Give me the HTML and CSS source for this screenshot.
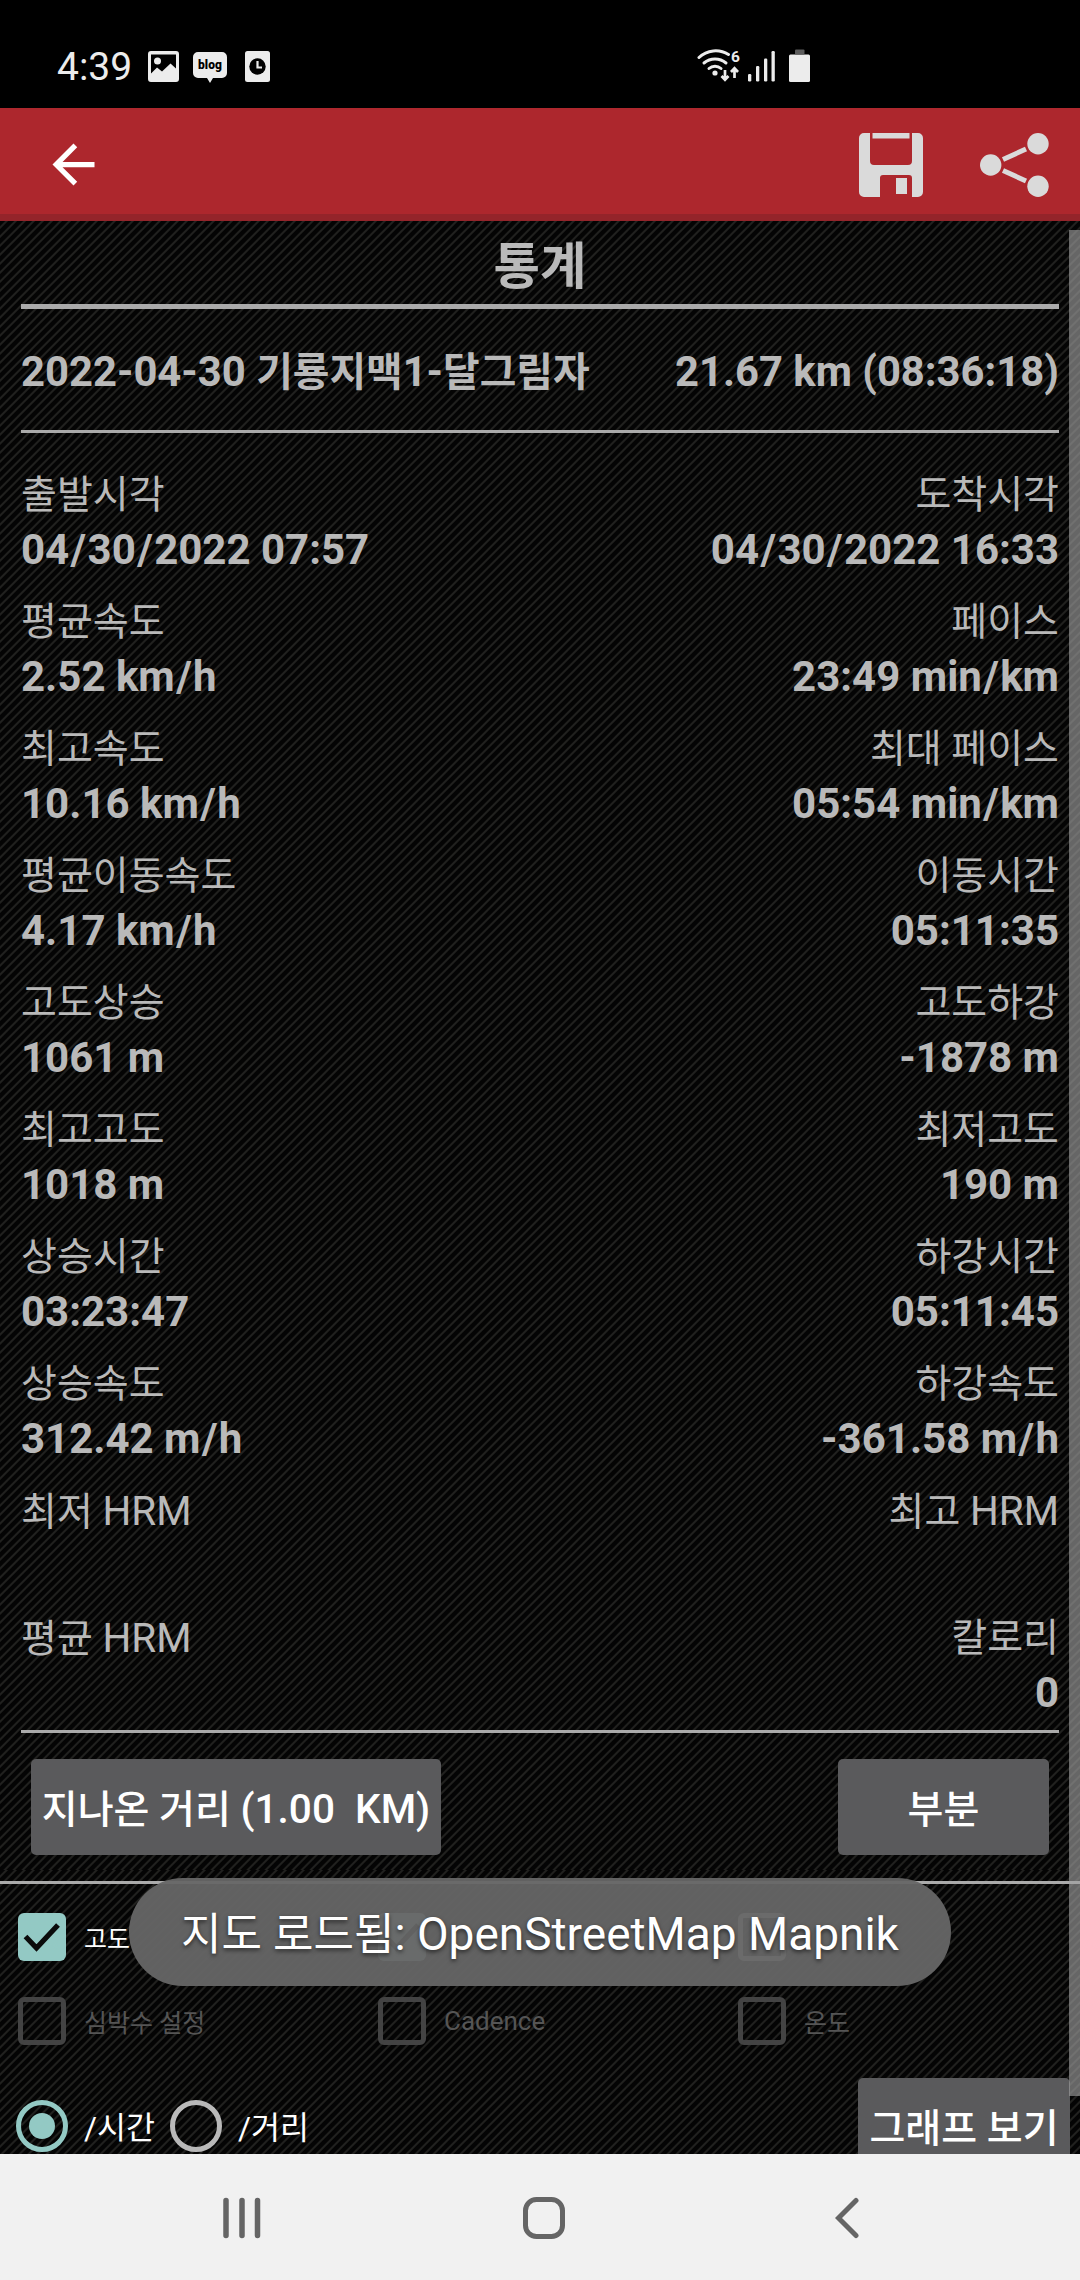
FILE: index.html
```html
<!DOCTYPE html>
<html lang="ko">
<head>
  <meta charset="UTF-8">
  <meta name="viewport" content="width=device-width, initial-scale=1.0">
  <title>통계</title>
  <link rel="stylesheet" href="styles.css">
</head>
<body>

  <!-- Status bar -->
  <div class="status-bar">
    <span class="clock">4:39</span>
    <svg class="icon-picture" width="31" height="31" viewBox="0 0 31 31">
      <path fill="#ececec" fill-rule="evenodd" d="M3 0h25a3 3 0 0 1 3 3v25a3 3 0 0 1-3 3H3a3 3 0 0 1-3-3V3a3 3 0 0 1 3-3zM3 3.500V22.500l6-6 5 4 8.500-8 5.500 5V3.500z"/>
      <circle cx="9.500" cy="10" r="3.500" fill="#ececec"/>
    </svg>
    <svg class="icon-blog" width="34" height="31" viewBox="0 0 34 31">
      <path fill="#ececec" d="M5 0h24a5 5 0 0 1 5 5v16a5 5 0 0 1-5 5h-9l-3 5-3-5H5a5 5 0 0 1-5-5V5a5 5 0 0 1 5-5z"/>
      <text x="17" y="17" text-anchor="middle" textLength="24" class="blog-text">blog</text>
    </svg>
    <svg class="icon-alarm" width="25" height="31" viewBox="0 0 25 31">
      <rect width="25" height="31" rx="2.500" fill="#ececec"/>
      <circle cx="12.500" cy="15.500" r="8.200" fill="#000"/>
      <path d="M12.500 10v6.500h4.500" fill="none" stroke="#ececec" stroke-width="2.200"/>
    </svg>
    <svg class="icon-signals" width="114" height="34" viewBox="0 0 114 34">
      <g fill="none" stroke="#ececec" stroke-width="3" stroke-linecap="round">
        <path d="M2 9.500a24 24 0 0 1 29.500-3"/>
        <path d="M7 15a17 17 0 0 1 22 0"/>
        <path d="M12 20.500a9 9 0 0 1 12 0"/>
      </g>
      <circle cx="18" cy="25" r="2.600" fill="#ececec"/>
      <text x="34" y="14" class="wifi-text">6</text>
      <path d="M28 22v10M24.500 28l3.500 3.700 3.500-3.700M37.500 30v-10M34 24l3.500-3.700L41 24" fill="none" stroke="#ececec" stroke-width="2.700"/>
      <g fill="#ececec">
        <rect x="51" y="26" width="3.300" height="7.500" rx="1.200"/>
        <rect x="59" y="18" width="3.300" height="15.500" rx="1.200"/>
        <rect x="67" y="10.500" width="3.300" height="23" rx="1.200"/>
        <rect x="74.500" y="3" width="3.300" height="30.500" rx="1.200"/>
        <rect x="92" y="6.500" width="21" height="27.500" rx="1.500"/>
      </g>
      <rect x="98" y="1.500" width="9.500" height="5" rx="1" fill="#5c5c5c"/>
    </svg>
  </div>

  <!-- App bar -->
  <header class="app-bar">
    <svg class="back" width="63" height="63" viewBox="0 0 24 24">
      <path fill="#fff" d="M20 11H7.830l5.590-5.590L12 4l-8 8 8 8 1.410-1.410L7.830 13H20v-2z"/>
    </svg>
    <svg class="save" width="64" height="64" viewBox="0 0 64 64">
      <path fill="#dadada" d="M5 0h6v28a4 4 0 0 0 4 4h34a4 4 0 0 0 4-4V0h6a5 5 0 0 1 5 5v54a5 5 0 0 1-5 5h-6V45a3 3 0 0 0-3-3H24a3 3 0 0 0-3 3v19H5a5 5 0 0 1-5-5V5a5 5 0 0 1 5-5z"/>
      <rect x="13.500" y="0" width="37" height="5.500" fill="#dadada"/>
      <rect x="37" y="45" width="11" height="16" fill="#dadada"/>
    </svg>
    <svg width="69" height="64" viewBox="0 0 69 64">
      <g fill="#dadada">
        <circle cx="10.700" cy="32" r="10.700"/>
        <circle cx="58" cy="10.800" r="10.700"/>
        <circle cx="58" cy="53.200" r="10.700"/>
      </g>
      <path d="M23 26.500l23-10.500M23 37.500L46 48" stroke="#dadada" stroke-width="5"/>
    </svg>
  </header>

  <!-- Statistics -->
  <main class="content">
    <section class="stats">
      <h1>통계</h1>
      <div class="track">
        <span>2022-04-30 <span class="ko">기룡지맥</span>1-<span class="ko">달그림자</span></span>
        <span>21.67 km (08:36:18)</span>
      </div>
      <div class="stat-list">
        <div class="stat-row">
          <div class="stat"><label>출발시각</label><b>04<i>/</i>30<i>/</i>2022 07:57</b></div>
          <div class="stat"><label>도착시각</label><b>04<i>/</i>30<i>/</i>2022 16:33</b></div>
        </div>
        <div class="stat-row">
          <div class="stat"><label>평균속도</label><b>2.52 km<i>/</i>h</b></div>
          <div class="stat"><label>페이스</label><b>23:49 min<i>/</i>km</b></div>
        </div>
        <div class="stat-row">
          <div class="stat"><label>최고속도</label><b>10.16 km<i>/</i>h</b></div>
          <div class="stat"><label>최대 페이스</label><b>05:54 min<i>/</i>km</b></div>
        </div>
        <div class="stat-row">
          <div class="stat"><label>평균이동속도</label><b>4.17 km<i>/</i>h</b></div>
          <div class="stat"><label>이동시간</label><b>05:11:35</b></div>
        </div>
        <div class="stat-row">
          <div class="stat"><label>고도상승</label><b>1061 m</b></div>
          <div class="stat"><label>고도하강</label><b>-1878 m</b></div>
        </div>
        <div class="stat-row">
          <div class="stat"><label>최고고도</label><b>1018 m</b></div>
          <div class="stat"><label>최저고도</label><b>190 m</b></div>
        </div>
        <div class="stat-row">
          <div class="stat"><label>상승시간</label><b>03:23:47</b></div>
          <div class="stat"><label>하강시간</label><b>05:11:45</b></div>
        </div>
        <div class="stat-row">
          <div class="stat"><label>상승속도</label><b>312.42 m<i>/</i>h</b></div>
          <div class="stat"><label>하강속도</label><b>-361.58 m<i>/</i>h</b></div>
        </div>
        <div class="stat-row">
          <div class="stat"><label>최저 <span class="hrm">HRM</span></label><b></b></div>
          <div class="stat"><label>최고 <span class="hrm">HRM</span></label><b></b></div>
        </div>
        <div class="stat-row">
          <div class="stat"><label>평균 <span class="hrm">HRM</span></label><b></b></div>
          <div class="stat"><label>칼로리</label><b>0</b></div>
        </div>
      </div>
      <div class="actions">
        <button class="btn btn-distance">지나온 거리 <span class="distance">(1.00&nbsp; KM)</span></button>
        <button class="btn btn-split">부분</button>
      </div>
    </section>

    <!-- Graph options -->
    <section class="graph">
      <div class="checks">
        <label class="check"><span class="box checked"><svg width="48" height="48" viewBox="0 0 48 48"><path d="M7.500 23.500l11 11.500L40 12" fill="none" stroke="#0b0b0b" stroke-width="5.200"/></svg></span>고도</label>
        <label class="check"><span class="box checked"><svg width="48" height="48" viewBox="0 0 48 48"><path d="M7.500 23.500l11 11.500L40 12" fill="none" stroke="#0b0b0b" stroke-width="5.200"/></svg></span></label>
        <label class="check"><span class="box"></span></label>
        <label class="check disabled"><span class="box"></span>심박수 설정</label>
        <label class="check disabled"><span class="box"></span><span class="latin">Cadence</span></label>
        <label class="check disabled"><span class="box"></span>온도</label>
      </div>
      <div class="axis">
        <label class="radio"><span class="ring on"></span><span class="axis-name">/시간</span></label>
        <label class="radio"><span class="ring"></span><span class="axis-name">/거리</span></label>
        <button class="btn btn-graph">그래프 보기</button>
      </div>
    </section>

    <div class="scrollbar"></div>
    <div class="toast"><span class="ko">지도 로드됨</span>: OpenStreetMap Mapnik</div>
  </main>

  <!-- Navigation bar -->
  <nav class="nav-bar">
    <svg width="38" height="42" viewBox="0 0 38 42">
      <path d="M3 3.500v35M19 3.500v35M34.500 3.500v35" stroke="#656565" stroke-width="5.500" stroke-linecap="round"/>
    </svg>
    <svg class="home" width="42" height="42" viewBox="0 0 42 42">
      <rect x="2.500" y="2.500" width="37" height="37" rx="11" fill="none" stroke="#656565" stroke-width="5"/>
    </svg>
    <svg width="24" height="42" viewBox="0 0 24 42">
      <path d="M21 3.500L3.500 21 21 38.500" fill="none" stroke="#656565" stroke-width="5" stroke-linecap="round"/>
    </svg>
  </nav>

</body>
</html>
```

FILE: styles.css
```css
* {
  box-sizing: border-box;
}
body {
  margin: 0;
  width: 1080px;
  height: 2280px;
  overflow: hidden;
  display: flex;
  flex-direction: column;
  background-color: #000;
  color: #b9b9b9;
  font-family: Roboto, "Noto Sans CJK KR", sans-serif;
}
svg {
  display: block;
  flex: none;
}

/* Status bar */
.status-bar {
  height: 108px;
  flex: none;
  padding: 48px 0 0 57px;
  display: flex;
  align-items: flex-start;
  color: #ececec;
}
.clock {
  width: 91px;
  font-size: 39px;
  line-height: 39px;
}
.icon-picture {
  margin: 3px 14px 0 0;
}
.icon-blog {
  margin: 4px 18px 0 0;
}
.icon-alarm {
  margin: 3px 427px 0 0;
}
.blog-text {
  font-size: 12px;
  font-weight: 900;
  fill: #000;
}
.wifi-text {
  font-size: 15.500px;
  font-weight: 700;
  fill: #ececec;
}

/* App bar */
.app-bar {
  height: 113px;
  flex: none;
  display: flex;
  align-items: center;
  padding: 7px 31px 0 42px;
  background-color: #ad272d;
  border-bottom: 7px solid #94242a;
}
.app-bar .save {
  margin: 0 57px 0 auto;
}

/* Content */
.content {
  position: relative;
  height: 1933px;
  flex: none;
  overflow: hidden;
}
.stats,
.graph {
  background: repeating-linear-gradient(135deg, #040404 0, #040404 3.200px, #21211f 4.300px, #21211f 5.200px, #040404 6.364px);
}
.stats {
  height: 1649px;
  padding: 0 21px;
}
h1 {
  height: 88px;
  margin: 0;
  border-bottom: 5px solid #aaa;
  font-size: 50.500px;
  line-height: 92px;
  text-align: center;
}
.track {
  display: flex;
  justify-content: space-between;
  height: 124px;
  border-bottom: 3px solid #aaa;
  font-size: 41.800px;
  font-weight: bold;
  line-height: 125px;
}
.track .ko {
  font-size: 39.800px;
}
.stat-list {
  height: 1300px;
  padding-top: 33px;
  border-bottom: 3px solid #aaa;
}
.stat-row {
  display: flex;
  justify-content: space-between;
  height: 127px;
}
.stat label,
.stat b {
  display: block;
  height: 56px;
  line-height: 56px;
}
.stat label {
  font-size: 39px;
  line-height: 59px;
}
.stat .hrm {
  font-size: 40.400px;
}
.stat b {
  font-size: 42px;
}
.stat i {
  font-style: normal;
  margin: 0 1.400px;
}
.stat:last-child {
  text-align: right;
}
.actions {
  display: flex;
  justify-content: space-between;
  padding: 26px 10px 0;
}
.btn {
  height: 96px;
  padding: 0 0 3px;
  border: none;
  border-radius: 5px;
  background-color: #5a5a5c;
  color: #fff;
  font-family: inherit;
  font-size: 39px;
  font-weight: 500;
}
.btn-distance {
  width: 410px;
  white-space: nowrap;
}
.distance {
  font-size: 40.500px;
}
.btn-split {
  width: 211px;
}

/* Graph options */
.graph {
  height: 284px;
  padding-top: 11px;
  color: #fff;
}
.checks {
  display: grid;
  grid-template-columns: repeat(3, 360px);
  grid-auto-rows: 84px;
  padding: 11px 0 0 18px;
  border-top: 3px solid #aaa;
}
.check {
  display: flex;
  align-items: center;
  gap: 18px;
  font-size: 25px;
}
.box {
  width: 48px;
  height: 48px;
  border: 5px solid #b9b9b9;
  border-radius: 6px;
}
.box.checked {
  border: none;
  background-color: #93c9c4;
}
.disabled {
  color: #555;
}
.disabled .box {
  border-color: #434343;
}
.latin {
  font-size: 26px;
}
.axis {
  display: flex;
  align-items: flex-start;
  padding: 15px 10px 0 16px;
}
.radio {
  display: flex;
  align-items: center;
  gap: 16px;
  height: 52px;
  width: 154px;
  margin-top: 22px;
  font-size: 31.500px;
}
.axis-name {
  padding-bottom: 3px;
}
.ring {
  width: 52px;
  height: 52px;
  flex: none;
  padding: 8px;
  border: 5px solid #b9b9b9;
  border-radius: 50%;
}
.ring.on {
  border-color: #93c9c4;
  background: #93c9c4 content-box;
  background-clip: content-box;
}
.btn-graph {
  width: 212px;
  margin-left: auto;
}

/* Overlays */
.scrollbar {
  position: absolute;
  top: 9px;
  right: 0;
  width: 11px;
  height: 1866px;
  background-color: rgba(160, 160, 160, 0.63);
}
.toast {
  position: absolute;
  top: 1657px;
  left: 129px;
  width: 822px;
  height: 108px;
  border-radius: 54px;
  background-color: rgba(102, 102, 102, 0.95);
  color: #fff;
  font-size: 46px;
  line-height: 113px;
  text-align: center;
  text-shadow: 0 2px 4px rgba(0, 0, 0, 0.6);
}
.toast .ko {
  font-size: 44px;
}

/* Navigation bar */
.nav-bar {
  height: 126px;
  flex: none;
  display: flex;
  align-items: center;
  padding: 2px 0 0 223px;
  background-color: #f1f1f1;
}
.nav-bar .home {
  margin: 0 270px 0 262px;
}
```
